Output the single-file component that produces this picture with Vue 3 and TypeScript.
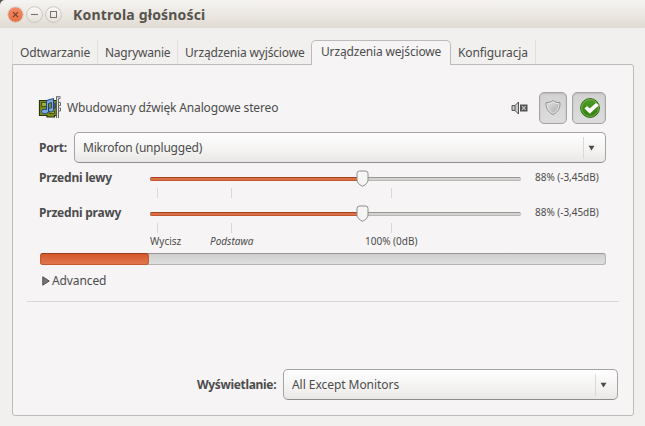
<script setup lang="ts">
import { ref } from 'vue'

interface Tab {
  label: string
  cls: string
}
interface Channel {
  label: string
  value: string
}

const tabs: Tab[] = [
  { label: 'Odtwarzanie', cls: 't1' },
  { label: 'Nagrywanie', cls: 't2' },
  { label: 'Urządzenia wyjściowe', cls: 't3' },
  { label: 'Urządzenia wejściowe', cls: 't4' },
  { label: 'Konfiguracja', cls: 't5' },
]
const active = ref(3)

const channels: Channel[] = [
  { label: 'Przedni lewy', value: '88% (-3,45dB)' },
  { label: 'Przedni prawy', value: '88% (-3,45dB)' },
]
</script>

<template>
  <div class="window">
    <header class="titlebar">
      <svg class="controls" width="60" height="20" viewBox="0 0 60 20">
        <defs>
          <linearGradient id="cl" x1="0" y1="0" x2="0" y2="1">
            <stop offset="0" stop-color="#f58a66" />
            <stop offset="1" stop-color="#ea6f42" />
          </linearGradient>
          <linearGradient id="bt" x1="0" y1="0" x2="0" y2="1">
            <stop offset="0" stop-color="#fbfaf9" />
            <stop offset="1" stop-color="#e4e0da" />
          </linearGradient>
        </defs>
        <circle cx="10.500" cy="9.600" r="7.700" fill="url(#cl)" stroke="#d2cbc4" stroke-width="1" />
        <path d="M8 7.100l5 5M13 7.100l-5 5" stroke="#69402f" stroke-width="1.100" />
        <circle cx="29.500" cy="9.600" r="7.900" fill="url(#bt)" stroke="#c6c1ba" stroke-width=".9" />
        <path d="M26 9.500h7" stroke="#77736c" stroke-width="1.100" />
        <circle cx="48.500" cy="9.600" r="7.900" fill="url(#bt)" stroke="#c6c1ba" stroke-width=".9" />
        <rect x="45.500" y="6.500" width="6" height="6" fill="none" stroke="#77736c" />
      </svg>
      <h1>Kontrola głośności</h1>
    </header>

    <nav class="tabs">
      <button
        v-for="(tab, i) in tabs"
        :key="tab.label"
        class="tab"
        :class="[tab.cls, { active: i === active }]"
        @click="active = i"
      ><span>{{ tab.label }}</span></button>
    </nav>

    <main class="panel">
      <section class="device">
        <svg class="card" width="24" height="24" viewBox="0 0 24 24">
          <path d="M1.500 4.500h17v15h-2v1.500H9v-1.500H1.500z" fill="#7b8f1c" stroke="#2c330a" stroke-width="1.200" />
          <path d="M3.500 6.500h5v4h-5zM11 15h5.500v2.500H11z" fill="#a3ad3c" stroke="#47500f" />
          <path d="M14 7h4v6h-4z" fill="#4c4f50" />
          <path d="M8.500 4.500L15.500 2.500v11c0 3.200-5 3.200-5 .5 0-1.500 1.500-2 3-2V6.500l-3 1V15c0 3.500-7 3.500-7 .5 0-2 2.500-2.500 5-2z" fill="#7fabdc" stroke="#1f457c" stroke-width="1" />
          <path d="M22.500 1.700H19.500V22" fill="none" stroke="#56585a" stroke-width="2.800" />
          <path d="M22.500 1.700H19.500V22" fill="none" stroke="#e2e3e1" stroke-width="1.100" />
          <path d="M21 6.500h1.500v3H21M21 12h1.500v3H21" fill="none" stroke="#66686a" />
        </svg>
        <span class="name">Wbudowany dźwięk Analogowe stereo</span>
        <svg class="mute" width="17" height="16" viewBox="0 0 17 16">
          <path d="M1 5.500h3L7.500 2v12L4 10.500H1z" fill="#c9c9c9" stroke="#555" />
          <path d="M4 5.500v5" stroke="#555" />
          <rect x="9" y="4.500" width="7.500" height="7" fill="#555" />
          <path d="M11 6.200l3.600 3.600M14.600 6.200L11 9.800" stroke="#c8c8c8" stroke-width="1.100" />
        </svg>
        <button class="toggle lock">
          <svg width="18" height="18" viewBox="0 0 18 18">
            <defs>
              <linearGradient id="sh" x1="0" y1="0" x2="1" y2="1">
                <stop offset="0" stop-color="#dedede" />
                <stop offset="1" stop-color="#adadad" />
              </linearGradient>
            </defs>
            <path d="M9 1.500c2 1.600 4.200 2.200 7 2.200.2 5-1.500 9-7 11.800C3.500 12.700 1.800 8.700 2 3.700c2.800 0 5-.6 7-2.200z" fill="#e4e4e4" stroke="#8f8f8f" />
            <path d="M9 3.400c1.600 1.100 3.400 1.600 5.500 1.700-.1 3.800-1.700 6.800-5.500 8.900-3.800-2.100-5.400-5.100-5.500-8.900 2.100-.1 3.900-.6 5.500-1.700z" fill="url(#sh)" />
          </svg>
        </button>
        <button class="toggle default">
          <svg width="22" height="22" viewBox="0 0 22 22">
            <defs>
              <linearGradient id="gr" x1="0" y1="0" x2="0" y2="1">
                <stop offset="0" stop-color="#4f9d2a" />
                <stop offset="1" stop-color="#2f7d0c" />
              </linearGradient>
            </defs>
            <circle cx="11" cy="11" r="9.400" fill="url(#gr)" stroke="#2e6a12" />
            <circle cx="11" cy="11" r="8.400" fill="none" stroke="#83bd60" stroke-width=".8" />
            <path d="M5.500 11.500L8 9l2.700 2.500 6.300-5.500 2.800 2.200-9 8.600z" fill="#fff" />
          </svg>
        </button>
      </section>

      <section class="port">
        <label class="bold">Port:</label>
        <div class="combo">
          <span class="c1">Mikrofon (unplugged)</span>
          <i class="sep" />
          <svg width="7" height="6" viewBox="0 0 7 6"><path d="M.5.800h6L3.500 5.500z" fill="#4a4a48" /></svg>
        </div>
      </section>

      <section v-for="ch in channels" :key="ch.label" class="channel">
        <label class="bold">{{ ch.label }}</label>
        <div class="scale">
          <div class="track">
            <div class="fill" />
            <svg class="knob" width="13" height="18" viewBox="0 0 13 18">
              <path d="M3.500 1h6Q12 1 12 3.500V10c0 2.500-2 4.500-5.500 6.300C3 14.500 1 12.500 1 10V3.500Q1 1 3.500 1z" fill="#f5f5f4" stroke="#8e8e8c" />
            </svg>
          </div>
          <div class="ticks"><i /><i /><i /></div>
        </div>
        <span class="value">{{ ch.value }}</span>
      </section>

      <div class="marks">
        <span class="m1">Wycisz</span>
        <em class="m2">Podstawa</em>
        <span class="m3">100% (0dB)</span>
      </div>

      <div class="meter"><div /></div>

      <div class="expander">
        <svg width="8" height="10" viewBox="0 0 8 10"><path d="M.8.800v8.400L7.200 5z" fill="#777" stroke="#4a4a48" /></svg>
        <span>Advanced</span>
      </div>
      <hr />

      <footer class="show">
        <label class="bold">Wyświetlanie:</label>
        <div class="combo">
          <span class="c2">All Except Monitors</span>
          <i class="sep" />
          <svg width="7" height="6" viewBox="0 0 7 6"><path d="M.5.800h6L3.500 5.500z" fill="#4a4a48" /></svg>
        </div>
      </footer>
    </main>
  </div>
</template>

<style>
body {
  margin: 0;
  background: #f1f0ee;
}
</style>

<style scoped>
* {
  box-sizing: border-box;
}
.window {
  width: 645px;
  height: 426px;
  overflow: hidden;
  background: linear-gradient(#55514b 6px, #f1f0ee 6px);
  color: #4c4c4c;
  font: 12px/16px 'Noto Sans', 'Open Sans', sans-serif;
  white-space: nowrap;
}
button {
  font: inherit;
  color: inherit;
  margin: 0;
}
.titlebar {
  height: 28px;
  display: flex;
  align-items: center;
  padding-left: 5px;
  background: linear-gradient(#f6f4f2, #e0dbd3);
  border-radius: 5px 0 0 0;
}
.controls {
  margin-top: 1px;
}
h1 {
  margin: 1px 0 0 8px;
  font-size: 14px;
  line-height: 20px;
  font-weight: 700;
  letter-spacing: 0.17px;
  color: #57534d;
}
.tabs {
  display: flex;
  align-items: flex-end;
  height: 37px;
  padding-left: 12px;
  position: relative;
  z-index: 1;
}
.tab {
  height: 24px;
  border: 0;
  border-left: 1px solid #e0dfdd;
  background: none;
  padding: 2px 0 0 7px;
  text-align: left;
  margin-bottom: 1px;
  letter-spacing: -0.16px;
}
.t1 { width: 85px; }
.t2 { width: 80px; letter-spacing: -0.25px; }
.t3 { width: 134px; }
.t4 { width: 140px; }
.t5 { width: 85px; border-left: 0; border-right: 1px solid #e0dfdd; letter-spacing: -0.1px; }
.tab.active {
  height: 25px;
  margin-bottom: 0;
  padding: 0 0 2px 9px;
  border: 1px solid #bcbbb9;
  border-bottom: 0;
  border-radius: 5px 5px 0 0;
  background: #f6f4f5;
}
.panel {
  width: 622px;
  height: 352px;
  margin: -1px 0 0 12px;
  border: 1px solid #bcbbb9;
  border-radius: 0 3px 3px 3px;
  background: #f6f4f5;
  padding: 27px 14px 0 14px;
}
.device {
  display: flex;
  align-items: center;
  height: 32px;
  padding: 0 13px 0 11px;
}
.name {
  margin-left: 5px;
  letter-spacing: -0.16px;
}
.mute {
  margin-left: auto;
}
.toggle {
  height: 32px;
  padding: 0;
  display: flex;
  align-items: center;
  justify-content: center;
  border: 1px solid #a5a4a3;
  border-radius: 5px;
  background: linear-gradient(#d3d2d2, #dedddd);
  box-shadow: inset 0 1px 2px #bbb;
}
.lock {
  width: 28px;
  margin-left: 11px;
}
.default {
  width: 34px;
  margin-left: 5px;
  padding-left: 2px;
}
.port {
  display: flex;
  align-items: center;
  height: 31px;
  margin-top: 8px;
  padding: 0 13px 0 12px;
}
.port .bold {
  width: 35px;
}
.bold {
  font-weight: 700;
  letter-spacing: -0.22px;
}
.combo {
  flex: 1;
  height: 31px;
  display: flex;
  align-items: center;
  padding: 0 10px 0 8px;
  border: 1px solid #a4a3a1;
  border-bottom-color: #8e8d8b;
  border-radius: 5px;
  background: linear-gradient(#fefefe, #f4f3f2 60%, #e9e8e6);
}
.c1 { letter-spacing: -0.2px; }
.c2 { letter-spacing: -0.05px; }
.sep {
  width: 1px;
  height: 22px;
  margin-left: auto;
  margin-right: 4px;
  background: #dad9d7;
}
.channel {
  display: flex;
  height: 35px;
  padding: 0 0 0 12px;
}
.port + .channel {
  margin-top: 7px;
}
.channel .bold {
  width: 111px;
}
.scale {
  width: 371px;
}
.track {
  position: relative;
  height: 4px;
  margin-top: 7px;
  border-radius: 2px;
  background: #d3d3d2;
  border-top: 1px solid #989796;
  border-bottom: 1px solid #b8b7b6;
}
.fill {
  position: absolute;
  left: 0;
  top: -1px;
  width: 212px;
  height: 4px;
  border-radius: 2px 0 0 2px;
  background: #d9704a;
  border-top: 1px solid #a3441f;
  border-bottom: 1px solid #c5562d;
}
.knob {
  position: absolute;
  left: 205.500px;
  top: -8px;
}
.ticks {
  display: grid;
  grid-template-columns: 74px 160px 1px;
  height: 10px;
  margin: 7px 0 0 7px;
}
.ticks i {
  width: 1px;
  background: #d9d7d8;
}
.value {
  margin: -1px 0 0 14px;
  font-size: 10px;
  letter-spacing: -0.03px;
}
.marks {
  display: flex;
  height: 14px;
  margin-top: -6px;
  padding-left: 123px;
  font-size: 10px;
  line-height: 14px;
}
.m1 { width: 60px; }
.m2 { width: 155px; }
.meter {
  height: 12px;
  margin: 5px 13px 0 13px;
  border: 1px solid #b5b4b3;
  border-top-color: #969594;
  border-radius: 3px;
  background: linear-gradient(#cfcfce, #e0dfdf);
}
.meter div {
  width: 109px;
  height: 12px;
  margin: -1px;
  border: 1px solid #c35a32;
  border-top-color: #96401f;
  border-radius: 3px;
  background: linear-gradient(#d3582b, #e0764e);
}
.expander {
  display: flex;
  align-items: center;
  height: 16px;
  margin: 8px 0 0 15px;
}
.expander span {
  margin-left: 2px;
  letter-spacing: -0.1px;
}
hr {
  height: 1px;
  border: 0;
  margin: 12px 0 0;
  background: #d9d7d8;
}
.show {
  display: flex;
  align-items: center;
  justify-content: flex-end;
  margin: 67px 1px 0 0;
}
.show .combo {
  flex: none;
  width: 335px;
}
.show .bold {
  width: 86px;
  letter-spacing: -0.32px;
}
</style>
